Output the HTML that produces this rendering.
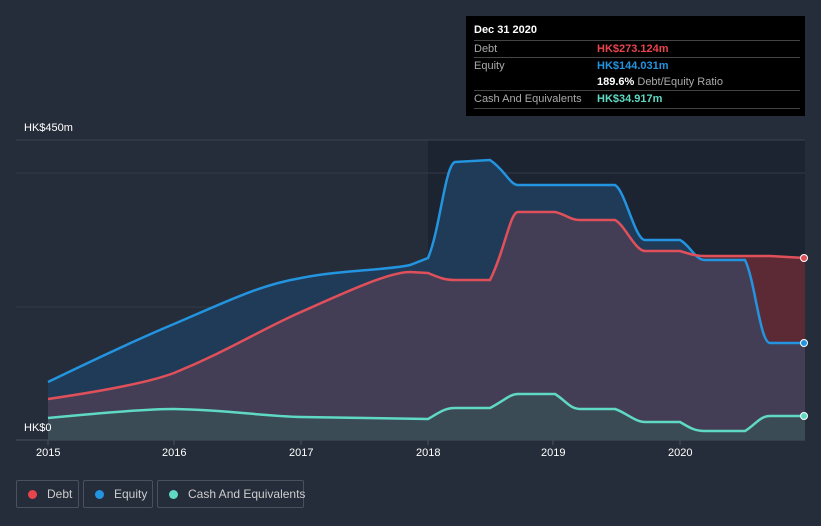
<!DOCTYPE html><html><head><style>
body{margin:0;width:821px;height:526px;background:#262d3a;font-family:"Liberation Sans",sans-serif;overflow:hidden;position:relative}
.t{position:absolute;color:#fff;font-size:11px}
.tip{position:absolute;left:466px;top:16px;width:339px;height:100px;background:#000;}
.row{position:absolute;left:8px;width:326px;border-top:1px solid #444;font-size:11px;color:#aaa;height:17px;line-height:17px}
.row b{font-weight:bold}
.leg{position:absolute;top:480px;height:26px;border:1px solid #4a505c;border-radius:2px;color:#ccc;font-size:12px;line-height:26px;white-space:nowrap;box-sizing:border-box;height:28px}
.leg i{display:inline-block;width:9px;height:9px;border-radius:50%;margin:0 10px 0 11px;vertical-align:-1px}
</style></head><body>
<svg width="821" height="526" style="position:absolute;left:0;top:0">
<defs><clipPath id="ce"><path d="M48,382 C110,352 150,334 174,324 C230,300 260,285 301,278 C340,270 390,270 410,265 L428,258 C440,230 445,165 455,162 L490,160 C505,170 510,185 518,185 L615,185 C625,190 635,240 645,240 L680,240 C690,245 695,260 705,260 L745,260 C755,280 760,343 770,343 L805,343 L805,440 L48,440Z"/></clipPath></defs>
<rect x="428" y="140" width="377" height="300" fill="#1c2331"/>
<line x1="16" y1="140" x2="805" y2="140" stroke="#3a4150"/>
<line x1="16" y1="173" x2="805" y2="173" stroke="#333a48"/>
<line x1="16" y1="307" x2="805" y2="307" stroke="#333a48"/>
<line x1="16" y1="440" x2="805" y2="440" stroke="#4a505c"/>
<path d="M48,399 C110,390 150,382 174,373 C230,350 260,330 301,312 C350,290 390,272 410,272 L428,273 C440,278 445,280 455,280 L490,280 C505,250 510,212 518,212 L555,212 C565,214 570,220 580,220 L615,220 C625,225 635,251 645,251 L680,251 C690,254 695,256 705,256 L770,256 L805,258 L805,440 L48,440Z" fill="#5b2a35"/>
<path d="M48,382 C110,352 150,334 174,324 C230,300 260,285 301,278 C340,270 390,270 410,265 L428,258 C440,230 445,165 455,162 L490,160 C505,170 510,185 518,185 L615,185 C625,190 635,240 645,240 L680,240 C690,245 695,260 705,260 L745,260 C755,280 760,343 770,343 L805,343 L805,440 L48,440Z" fill="#1f3b58"/>
<path d="M48,399 C110,390 150,382 174,373 C230,350 260,330 301,312 C350,290 390,272 410,272 L428,273 C440,278 445,280 455,280 L490,280 C505,250 510,212 518,212 L555,212 C565,214 570,220 580,220 L615,220 C625,225 635,251 645,251 L680,251 C690,254 695,256 705,256 L770,256 L805,258 L805,440 L48,440Z" fill="#433e55" clip-path="url(#ce)"/>
<path d="M48,418 C110,412 150,409 174,409 C230,410 260,416 301,417 L428,419 C440,412 445,408 455,408 L490,408 C505,400 510,394 518,394 L555,394 C565,400 570,409 580,409 L615,409 C625,412 635,422 645,422 L680,422 C690,428 695,431 705,431 L745,431 C755,425 760,416 770,416 L805,416 L805,440 L48,440Z" fill="#3a4b55"/>
<g fill="none" stroke-width="2.5">
<path d="M48,382 C110,352 150,334 174,324 C230,300 260,285 301,278 C340,270 390,270 410,265 L428,258 C440,230 445,165 455,162 L490,160 C505,170 510,185 518,185 L615,185 C625,190 635,240 645,240 L680,240 C690,245 695,260 705,260 L745,260 C755,280 760,343 770,343 L805,343" stroke="#2394df"/>
<path d="M48,399 C110,390 150,382 174,373 C230,350 260,330 301,312 C350,290 390,272 410,272 L428,273 C440,278 445,280 455,280 L490,280 C505,250 510,212 518,212 L555,212 C565,214 570,220 580,220 L615,220 C625,225 635,251 645,251 L680,251 C690,254 695,256 705,256 L770,256 L805,258" stroke="#e0505a"/>
<path d="M48,418 C110,412 150,409 174,409 C230,410 260,416 301,417 L428,419 C440,412 445,408 455,408 L490,408 C505,400 510,394 518,394 L555,394 C565,400 570,409 580,409 L615,409 C625,412 635,422 645,422 L680,422 C690,428 695,431 705,431 L745,431 C755,425 760,416 770,416 L805,416" stroke="#5fd9c4"/>
</g>
<circle cx="804" cy="258" r="3.5" fill="#e0505a" stroke="#fff"/>
<circle cx="804" cy="343" r="3.5" fill="#2394df" stroke="#fff"/>
<circle cx="804" cy="416" r="3.5" fill="#5fd9c4" stroke="#fff"/>
<g stroke="#4a505c"><line x1="48" y1="440" x2="48" y2="445"/><line x1="174" y1="440" x2="174" y2="445"/><line x1="301" y1="440" x2="301" y2="445"/><line x1="428" y1="440" x2="428" y2="445"/><line x1="553" y1="440" x2="553" y2="445"/><line x1="680" y1="440" x2="680" y2="445"/></g>
</svg>
<div class="t" style="left:24px;top:122px">HK$450m</div>
<div class="t" style="left:24px;top:422px">HK$0</div>
<div class="t" style="left:36px;top:447px">2015</div>
<div class="t" style="left:162px;top:447px">2016</div>
<div class="t" style="left:289px;top:447px">2017</div>
<div class="t" style="left:416px;top:447px">2018</div>
<div class="t" style="left:541px;top:447px">2019</div>
<div class="t" style="left:668px;top:447px">2020</div>
<div class="tip">
<div style="position:absolute;left:8px;top:8px;color:#fff;font-size:11px;font-weight:bold">Dec 31 2020</div>
<div class="row" style="top:24px">Debt<b style="position:absolute;left:123px;color:#e8444c">HK$273.124m</b></div>
<div class="row" style="top:41px">Equity<b style="position:absolute;left:123px;color:#2394df">HK$144.031m</b></div>
<div class="row" style="top:58px;border:0"><span style="position:absolute;left:123px"><b style="color:#fff">189.6%</b> Debt/Equity Ratio</span></div>
<div class="row" style="top:74px;border-bottom:1px solid #444">Cash And Equivalents<b style="position:absolute;left:123px;color:#5fd9c4">HK$34.917m</b></div>
</div>
<div class="leg" style="left:16px;width:63px"><i style="background:#e8444c"></i>Debt</div>
<div class="leg" style="left:83px;width:70px"><i style="background:#2394df"></i>Equity</div>
<div class="leg" style="left:157px;width:147px"><i style="background:#5fd9c4"></i>Cash And Equivalents</div>
</body></html>
